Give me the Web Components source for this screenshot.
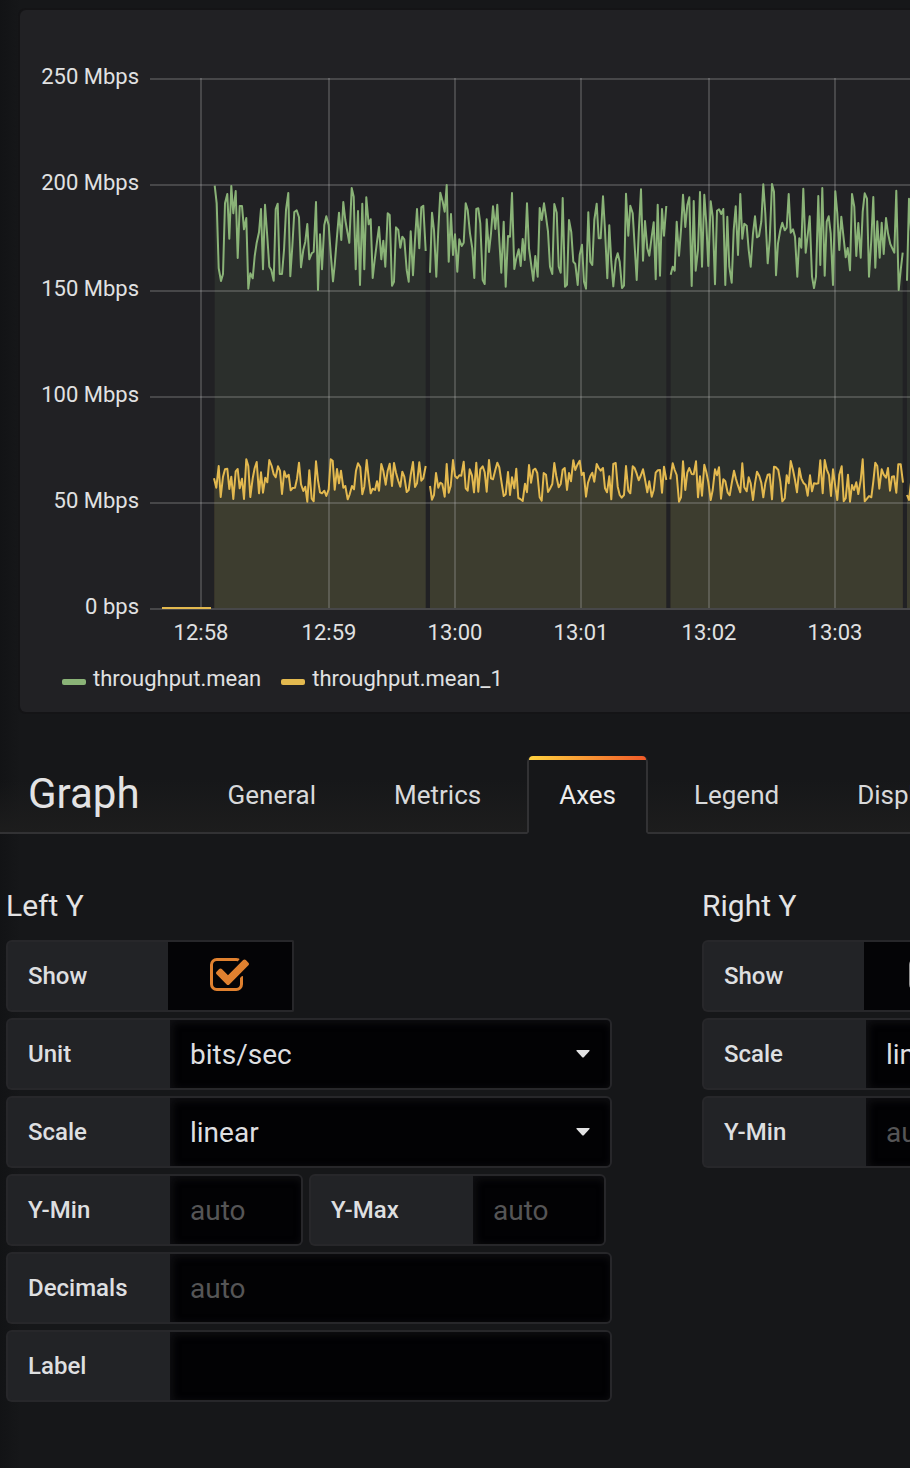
<!DOCTYPE html>
<html lang="en">
<head>
<meta charset="utf-8">
<meta name="viewport" content="width=device-width, initial-scale=1">
<title>Graph - Axes</title>
<style>
  html { background: #161719; }
  body {
    margin: 0;
    min-height: 100vh;
    overflow-x: hidden;
    font-family: Roboto, "Liberation Sans", sans-serif;
    color: #d8d9da;
    background: linear-gradient(90deg, #121315, #161719 20px);
  }
</style>
</head>
<body>
<panel-editor>
  <graph-panel>
    <legend-item slot="legend" color="#8ab377">throughput.mean</legend-item>
    <legend-item slot="legend" color="#e3b94f">throughput.mean_1</legend-item>
  </graph-panel>
  <editor-tabs heading="Graph">
    <tab-link>General</tab-link>
    <tab-link>Metrics</tab-link>
    <tab-link active>Axes</tab-link>
    <tab-link>Legend</tab-link>
    <tab-link>Display</tab-link>
  </editor-tabs>
  <axes-form>
    <axis-section heading="Left Y">
      <form-field kind="switch" label="Show" checked></form-field>
      <form-field kind="select" label="Unit" value="bits/sec"></form-field>
      <form-field kind="select" label="Scale" value="linear"></form-field>
      <field-group>
        <form-field label="Y-Min" placeholder="auto" small></form-field>
        <form-field label="Y-Max" placeholder="auto" small></form-field>
      </field-group>
      <form-field label="Decimals" placeholder="auto"></form-field>
      <form-field label="Label"></form-field>
    </axis-section>
    <axis-section heading="Right Y">
      <form-field kind="switch" label="Show"></form-field>
      <form-field kind="select" label="Scale" value="linear"></form-field>
      <form-field label="Y-Min" placeholder="auto" small></form-field>
    </axis-section>
  </axes-form>
</panel-editor>

<script>
class Base extends HTMLElement {
  constructor() {
    super();
    this.attachShadow({ mode: 'open' });
  }
  connectedCallback() {
    this.shadowRoot.innerHTML = this.render();
  }
}

customElements.define('panel-editor', class extends Base {
  render() {
    return `<style>
      :host { display: block; padding: 10px 0 40px; overflow: hidden; }
    </style><slot></slot>`;
  }
});

/* Samples are x,y pairs in thirds of a pixel, relative to each run's origin. */
const GREEN = [
  [[140, '224,47 230,100 236,295 243,333 249,312 255,100 262,72 268,206 274,48 280,130 287,63 293,264 299,108 306,108 312,178 319,144 325,356 331,310 338,325 344,258 350,218 357,187 363,117 369,298 375,104 382,200 388,290 394,300 401,332 407,117 413,101 419,312 426,312 432,240 438,120 445,69 451,319 457,230 463,126 470,121 477,142 483,292 490,240 496,215 502,162 508,268 515,250 521,245 528,96 534,360 540,193 546,298 553,165 559,139 566,165 572,250'],
   [330, '9,334 14,285 20,210 27,128 34,210 40,96 46,150 52,185 58,218 65,54 71,80 77,298 84,123 90,345 97,101 103,298 109,82 116,163 122,148 128,324 134,270 141,215 147,171 154,268 160,212 166,290 173,130 179,135 186,347 192,335 198,172 205,180 211,233 217,200 223,208 230,300 236,335 242,184 249,316 255,210 261,117 268,235 274,112 280,107 287,243']],
  [[330, '300,308 306,128 312,180 319,320 325,180 331,68 338,95 344,125 350,45 356,275 363,132 369,255 375,193 382,305 388,208 395,228 401,218 407,100 413,120 420,190 427,235 433,324 439,117 445,115 451,160 458,330 464,342 470,148 477,246 483,190 489,109 496,177 502,104 508,210 514,308 521,155 527,350 534,198 540,200 546,69 553,297 559,265 566,238'],
   [520, '2,288 8,207 14,270 21,100 27,235 33,280 40,332 46,258 53,320 59,114 65,150 72,100 78,140 84,185 90,290 97,312 103,102 110,128 116,290 122,308 128,84 135,350 141,344 147,150 154,187 160,275 166,282 173,345 179,255 186,224 192,335 198,356 205,127 211,275 217,285 223,150 230,101 236,205 242,205 249,79 255,180 262,325 268,166 274,275 280,349 287,270 293,250 299,275 306,354 312,347 318,71 325,197 331,107 338,130 344,230 350,330 356,190 363,58 369,272 375,153 382,235 388,257 395,200 401,157 407,328 413,104 420,317 426,117 432,197 439,108']],
  [[520, '452,314 458,290 464,302 470,155 477,257 483,180 489,74 496,171 502,105 508,82 515,348 521,93 527,302 534,240 540,66 546,290 553,74 559,160 565,288'],
   [710, '2,94 8,140 15,343 21,122 27,118 34,132 40,117 46,345 52,140 58,290 65,338 71,180 77,109 84,255 91,72 97,206 103,161 110,167 116,240 122,290 129,190 135,139 141,202 147,198 154,155 160,43 166,130 173,280 179,210 186,42 192,65 198,316 204,220 211,180 217,158 224,181 230,173 236,72 242,188 249,178 255,200 262,320 268,205 274,233 280,56 287,248 293,195 299,139 306,320 312,354 318,320 325,78 331,285 337,54 344,317 350,155 356,139 362,190 369,345 376,64 382,130 388,240 394,140 400,195 407,262 413,234 420,301 426,72 433,110 439,258 445,159 452,263 458,125 464,70 471,86 477,320 484,210 490,81 496,293 502,154 509,263 515,158 521,252 528,144 534,190 541,222 547,235 553,248 559,62 566,360 572,300 578,248']],
  [[710, '591,332 597,86 604,200']]
];
const YELLOW = [
  [[140, '222,115 229,143 236,78 242,171 249,110 255,88 262,86 268,147 274,110 280,177 287,94 293,87 299,145 306,116 312,177 319,58 325,78 331,171 338,115 344,84 350,66 357,160 363,97 369,158 376,113 382,127 388,60 395,78 401,103 407,112 414,79 420,92 426,162 433,94 439,112 446,104 452,151 458,144 465,143 471,116 477,68 483,133 490,153 496,140 502,185 508,91 515,176 521,184 528,64 534,121 540,157 546,160 553,152 559,168 566,148 572,58 578,62 584,149 591,87 597,130 603,92 610,143 616,138 623,178 629,163 636,138 642,148 648,92 654,70 661,82 667,163 673,140 680,60 686,115 692,160 698,146 705,150 711,124 717,152 724,72 730,92 737,134 743,92 749,71 756,138 762,69 768,98 775,123 781,140 787,95 793,110 800,156 806,150 812,105 819,66 825,141 831,130 838,67 844,122 850,115 857,78']],
  [[420, '30,138 36,179 42,165 48,99 55,143 61,128 67,132 74,170 80,72 86,158 92,138 99,60 105,108 112,115 118,106 124,107 131,65 137,145 143,152 149,88 156,107 162,157 169,68 175,155 181,88 188,79 194,97 200,155 207,60 213,115 219,118 226,90 232,68 238,82 245,130 251,168 257,163 264,96 270,165 276,112 283,145 289,86 295,174 301,177 308,183 315,131 321,157 327,75 333,128 340,90 346,86 352,99 359,172 365,182 371,99 378,104 384,156 390,146 397,132 403,69 409,108 416,142 422,132 428,89 434,84 441,150 447,99 453,124 460,61 466,90 472,75 479,62 485,105 491,98 498,170 504,128 511,108 517,98 523,125 530,72 536,84 542,92 549,84 555,145 561,157 568,109 574,178 580,72 587,69 593,140 599,165 605,173 612,165 618,78 625,152 631,160 638,79 644,85 650,101 656,121 663,105 669,88 675,118 682,157 688,124 695,170 701,150 707,98 713,91 720,90 726,158 732,80 739,120']],
  [[660, '31,118 38,70 44,90 50,105 57,185 63,172 69,64 76,150 82,98 88,84 95,102 101,103 108,64 114,172 120,109 126,167 133,74 139,96 145,125 152,180 158,150 165,88 171,106 177,82 183,176 190,118 196,124 203,158 209,166 215,130 222,92 228,117 234,137 241,157 247,70 253,142 260,154 266,112 272,130 279,180 285,130 291,95 298,108 304,128 310,172 316,130 323,104 329,103 336,178 342,80 348,82 355,90 361,125 367,184 374,175 380,106 386,130 392,63 399,90 405,120 411,157 418,85 424,115 430,128 437,135 443,167 450,106 456,154 462,130 469,131 475,130 481,61 488,160 494,60 500,88 507,105 513,168 519,88 526,140 532,180 538,104 545,79 551,184 557,175 564,104 570,185 576,135 582,150 589,127 595,162 602,120 608,58 614,184 621,176 627,168 634,172 640,125 646,68 652,78 658,146 665,88 671,104 678,113 684,84 690,152 696,110 702,109 709,158 715,73 722,73 729,128']],
  [[660, '741,165 747,180 754,120']]
];

customElements.define('graph-panel', class extends Base {
  series(segments, top, color) {
    const base = 598;
    return segments.map(runs => {
      const pts = runs.flatMap(([left, text]) => text.split(' ').map(p => {
        const [x, y] = p.split(',').map(Number);
        return [(left - 20 + x / 3).toFixed(1), (top - 10 + y / 3).toFixed(1)];
      }));
      const line = 'M' + pts.map(p => p.join(' ')).join('L');
      const area = `${line}L${pts[pts.length - 1][0]} ${base}L${pts[0][0]} ${base}Z`;
      return { area: `<path d="${area}" fill="${color}" fill-opacity="0.1"/>`,
               line: `<path d="${line}" fill="none" stroke="${color}" stroke-width="2" stroke-linejoin="round"/>` };
    });
  }
  render() {
    const green = this.series(GREEN, 170, '#8ab377');
    const yellow = this.series(YELLOW, 440, '#e3b94f');
    const ticksY = ['250 Mbps', '200 Mbps', '150 Mbps', '100 Mbps', '50 Mbps', '0 bps'];
    const ticksX = [[181, '12:58'], [309, '12:59'], [435, '13:00'], [561, '13:01'], [689, '13:02'], [815, '13:03']];
    const rows = ticksY.map((t, i) => `<rect x="130" y="${68 + i * 106}" width="100%" height="2"/>`).join('');
    const cols = ticksX.map(([x]) => `<rect x="${x - 1}" y="68" width="2" height="530"/>`).join('');
    return `<style>
      :host {
        display: block;
        margin-left: 20px;
        background: #212124;
        border-radius: 6px 0 0 6px;
        box-shadow: 0 0 0 2px #141416;
      }
      svg { display: block; width: 100%; height: 650px; overflow: hidden; }
      text { font-size: 22px; fill: #e0e1e2; }
      .y { text-anchor: end; }
      .x { text-anchor: middle; }
      .grid { fill: #c8c8c8; fill-opacity: 0.23; }
      .legend { display: flex; gap: 20px; padding: 5px 42px 19px; }
    </style>
    <svg role="img" aria-label="Throughput over time">
      ${green.map(s => s.area).join('')}${yellow.map(s => s.area).join('')}
      <g class="grid">${rows}${cols}</g>
      ${green.map(s => s.line).join('')}${yellow.map(s => s.line).join('')}
      <rect x="142" y="597" width="49" height="2" fill="#e3b94f"/>
      ${ticksY.map((t, i) => `<text class="y" x="119" y="${74 + i * 106}">${t}</text>`).join('')}
      ${ticksX.map(([x, t]) => `<text class="x" x="${x}" y="630">${t}</text>`).join('')}
    </svg>
    <div class="legend"><slot name="legend"></slot></div>`;
  }
});

customElements.define('legend-item', class extends Base {
  render() {
    return `<style>
      :host { display: flex; align-items: center; gap: 7px; font-size: 22px; line-height: 28px; color: #e0e1e2; }
      i { width: 24px; height: 6px; margin-top: 6px; border-radius: 2px; background: ${this.getAttribute('color')}; }
    </style><i></i><span><slot></slot></span>`;
  }
});

customElements.define('editor-tabs', class extends Base {
  render() {
    return `<style>
      :host {
        display: flex;
        height: 78px;
        margin-top: 44px;
        padding-left: 28px;
        background: linear-gradient(#1c1c1c00 30%, #1d1d1d);
        box-shadow: inset 0 -2px #323234;
      }
      h1 { margin: 0 56px 0 0; font-size: 42px; line-height: 76px; font-weight: 400; color: #e3e3e4; }
      nav { display: flex; gap: 14px; }
    </style><h1>${this.getAttribute('heading')}</h1><nav><slot></slot></nav>`;
  }
});

customElements.define('tab-link', class extends Base {
  render() {
    return `<style>
      :host { display: block; flex: none; }
      a {
        display: block;
        box-sizing: border-box;
        height: 78px;
        padding: 0 30px;
        border: 2px solid transparent;
        font-size: 26px;
        line-height: 74px;
        color: #d8d9da;
        text-decoration: none;
      }
      :host([active]) a {
        position: relative;
        color: #ececec;
        background: #161719;
        border-color: #323234;
        border-bottom-color: #161719;
        border-radius: 6px 6px 0 0;
      }
      :host([active]) a::before {
        content: "";
        position: absolute;
        inset: -2px 0 auto;
        height: 4px;
        border-radius: 4px 4px 0 0;
        background: linear-gradient(90deg, #ffd23f, #f05a28);
      }
    </style><a href="#"><slot></slot></a>`;
  }
});

customElements.define('axes-form', class extends Base {
  render() {
    return `<style>
      :host { display: flex; gap: 90px; padding: 51px 0 0 6px; }
    </style><slot></slot>`;
  }
});

customElements.define('axis-section', class extends Base {
  render() {
    return `<style>
      :host { display: flex; flex: none; flex-direction: column; gap: 6px; width: 606px; }
      h2 { margin: 0 0 7px; font-size: 30px; line-height: 42px; font-weight: 400; color: #e3e3e4; }
    </style><h2>${this.getAttribute('heading')}</h2><slot></slot>`;
  }
});

customElements.define('field-group', class extends Base {
  render() {
    return `<style>:host { display: flex; gap: 6px; }</style><slot></slot>`;
  }
});

const CHECKED = '<svg width="39" height="42" viewBox="64 0 1664 1792"><path fill="#e0812f" d="M1472 930v318q0 119-84.5 203.5t-203.5 84.5h-832q-119 0-203.5-84.5t-84.5-203.5v-832q0-119 84.5-203.5t203.5-84.5h832q63 0 117 25 15 7 18 23 3 17-9 29l-49 49q-10 10-23 10-3 0-9-2-23-6-45-6h-832q-66 0-113 47t-47 113v832q0 66 47 113t113 47h832q66 0 113-47t47-113v-254q0-13 9-22l64-64q10-10 23-10 6 0 12 3 20 8 20 29zm231-489l-814 814q-24 24-57 24t-57-24l-430-430q-24-24-24-57t24-57l110-110q24-24 57-24t57 24l263 263 647-647q24-24 57-24t57 24l110 110q24 24 24 57t-24 57z"/></svg>';
const EMPTY = '<svg width="33" height="42" viewBox="192 0 1408 1792"><path fill="#8e8e8e" d="M1312 256h-832q-66 0-113 47t-47 113v832q0 66 47 113t113 47h832q66 0 113-47t47-113v-832q0-66-47-113t-113-47zm288 160v832q0 119-84.5 203.5t-203.5 84.5h-832q-119 0-203.5-84.5t-84.5-203.5v-832q0-119 84.5-203.5t203.5-84.5h832q119 0 203.5 84.5t84.5 203.5z"/></svg>';

customElements.define('form-field', class extends Base {
  render() {
    const kind = this.getAttribute('kind') || 'text';
    const on = this.hasAttribute('checked');
    const value = this.getAttribute('value') || '';
    const control = {
      switch: `<input id="c" type="checkbox" ${on ? 'checked' : ''}>${on ? CHECKED : EMPTY}`,
      select: `<select id="c"><option>${value}</option></select><svg class="caret" width="14" height="8" viewBox="0 0 14 8"><path fill="#e3e3e4" d="M1 0h12q1 0 .5 1L8 7q-1 1-2 0L.5 1Q0 0 1 0z"/></svg>`,
      text: `<input id="c" type="text" placeholder="${this.getAttribute('placeholder') || ''}">`
    }[kind];
    return `<style>
      :host { display: flex; height: 72px; flex: none; }
      label {
        box-sizing: border-box;
        flex: none;
        width: 164px;
        padding-left: 20px;
        border: 2px solid #27272a;
        border-right: 0;
        border-radius: 6px 0 0 6px;
        background: #222326;
        font-size: 24px;
        line-height: 68px;
        font-weight: 500;
        color: #dedfe0;
      }
      .control { display: grid; flex: 1; min-width: 0; align-items: center; }
      .control > * { grid-area: 1 / 1; }
      :host([small]) .control { flex: none; width: 133px; }
      :host([kind="switch"]) label { width: 162px; }
      :host([kind="switch"]) .control { flex: none; width: 126px; justify-items: center; }
      :host([kind="switch"]) svg { margin-right: 4px; }
      input, select {
        appearance: none;
        box-sizing: border-box;
        width: 100%;
        height: 100%;
        margin: 0;
        padding: 0 20px;
        border: 2px solid #27272a;
        border-left: 0;
        border-radius: 0 6px 6px 0;
        background: #020204;
        box-shadow: inset 2px 2px 8px #121215;
        font: 28px/40px Roboto, "Liberation Sans", sans-serif;
        color: #dedfe0;
      }
      select { padding-top: 2px; }
      input[type="checkbox"] { border-radius: 0 2px 2px 0; box-shadow: none; background: #040406; }
      input::placeholder { color: #555556; opacity: 1; }
      svg { pointer-events: none; }
      .caret { justify-self: end; margin-right: 22px; }
    </style><label for="c">${this.getAttribute('label')}</label><div class="control">${control}</div>`;
  }
});
</script>
</body>
</html>
